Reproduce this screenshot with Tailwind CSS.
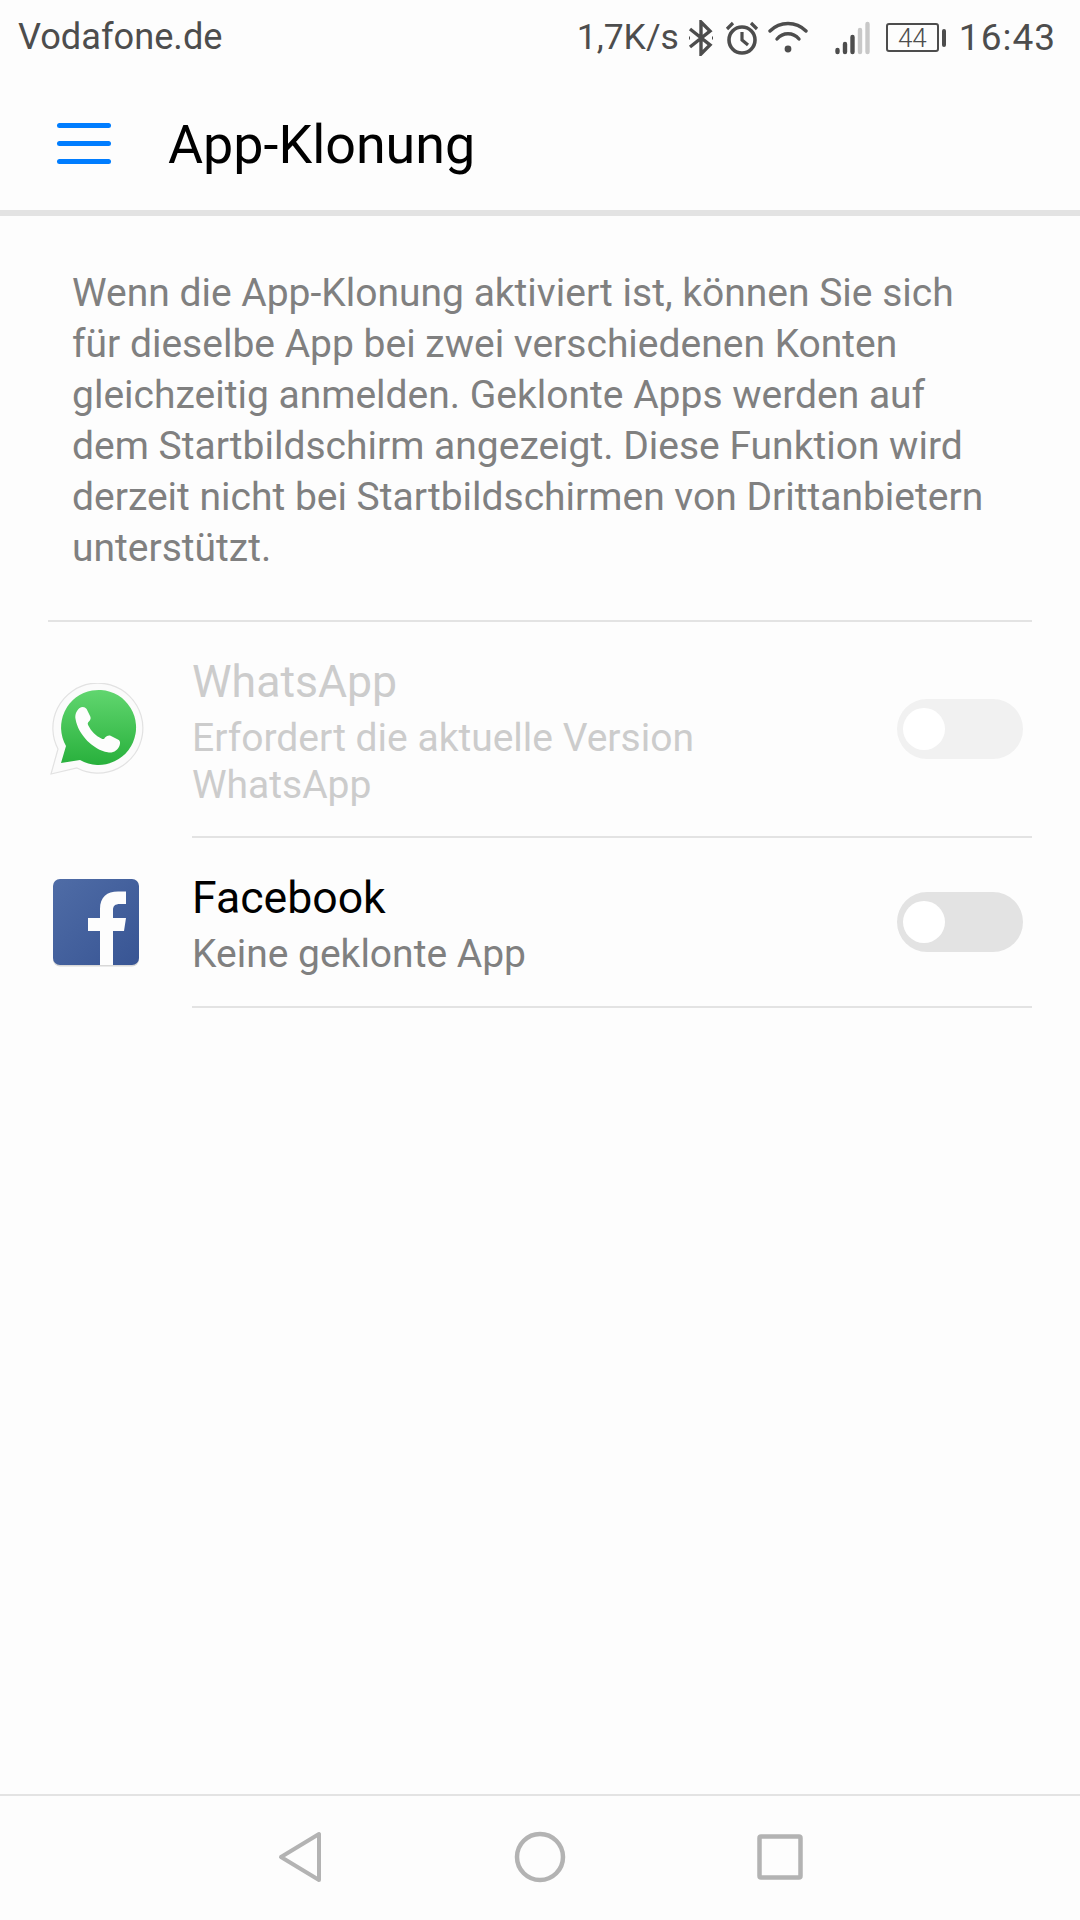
<!DOCTYPE html>
<html lang="de">
<head>
    <meta charset="UTF-8">
    <meta name="viewport" content="width=device-width, initial-scale=1.0">
    <title>App-Klonung</title>
    <script src="https://cdn.jsdelivr.net/npm/@tailwindcss/browser@4"></script>
</head>
<body class="w-[1080px] h-[1920px] flex flex-col bg-[#fdfdfd] font-[Roboto,sans-serif] overflow-hidden">

    <!-- Statusleiste -->
    <div class="h-[74px] shrink-0 flex items-center pl-[18px] pr-[24px] pt-[1px] text-[#4d4d4d]">
        <span class="text-[36.2px] flex-1">Vodafone.de</span>
        <span class="text-[35.5px] mr-[9px]">1,7K/s</span>
        <svg class="w-[26px] h-[36px] mr-[11px]" viewBox="0 0 26 36" fill="none" stroke="#4d4d4d" stroke-width="3.4"><path d="M2 9 L22 25 L13 34 V2 L22 11 L2 27"/><path d="M24 18h1M1 18h1" stroke-width="3"/></svg>
        <svg class="w-[34px] h-[34px] mr-[9px]" viewBox="0 0 34 34" fill="none" stroke="#4d4d4d" stroke-width="3.6"><circle cx="17" cy="19" r="13"/><path d="M17 11v8l6 5M2 8l6-6M32 8l-6-6" stroke-width="3.2"/></svg>
        <svg class="w-[40px] h-[34px] mr-[27px]" viewBox="0 0 40 34" fill="none" stroke="#4d4d4d" stroke-width="3.4" stroke-linecap="round"><path d="M2 10C12 0 28 0 38 10"/><path d="M9 18C15 11 25 11 31 18"/><circle cx="20" cy="28" r="3.4" fill="#4d4d4d" stroke="none"/></svg>
        <svg class="w-[35px] h-[34px] mr-[16px]" viewBox="0 0 35 34" stroke-linecap="round" stroke-width="4.4"><path d="M2.5 29v2M10 23v8M17.5 16v15" stroke="#4d4d4d"/><path d="M25 9v22M32.5 3v28" stroke="#c8c8c8"/></svg>
        <div class="w-[53px] h-[29px] border-2 border-[#4d4d4d] rounded-[3px] flex items-center justify-center text-[26px] font-light leading-none">44</div>
        <div class="w-[4px] h-[18px] bg-[#4d4d4d] rounded-[2px] ml-[3px] mr-[13px]"></div>
        <span class="text-[37px] tracking-[1px]">16:43</span>
    </div>

    <!-- Kopfzeile -->
    <div class="h-[142px] shrink-0 flex items-center border-b-[6px] border-[#e3e3e3] pt-[3px]">
        <div class="ml-[57px] w-[54px] flex flex-col gap-[13px]">
            <div class="h-[5px] rounded-full bg-[#007dff]"></div>
            <div class="h-[5px] rounded-full bg-[#007dff]"></div>
            <div class="h-[5px] rounded-full bg-[#007dff]"></div>
        </div>
        <h1 class="ml-[57px] mt-[4px] text-[53.8px] text-black">App-Klonung</h1>
    </div>

    <!-- Beschreibung -->
    <p class="pt-[52px] pl-[72px] h-[403px] shrink-0 text-[39px] leading-[51px] text-[#808080] whitespace-nowrap">Wenn die App-Klonung aktiviert ist, können Sie sich<br>für dieselbe App bei zwei verschiedenen Konten<br>gleichzeitig anmelden. Geklonte Apps werden auf<br>dem Startbildschirm angezeigt. Diese Funktion wird<br>derzeit nicht bei Startbildschirmen von Drittanbietern<br>unterstützt.</p>

    <!-- App-Liste -->
    <div class="mx-[48px] mt-[1px] border-t-2 border-[#e3e3e3]"></div>

    <div class="flex items-center h-[214px] shrink-0">
        <div class="w-[144px] pl-[50px] shrink-0">
            <svg class="w-[94px] h-[94px] mt-[2px]" viewBox="0 0 94 94">
                <defs><linearGradient id="wa" x1="0" y1="0" x2="0" y2="1"><stop offset="0" stop-color="#61d66f"/><stop offset="1" stop-color="#28b03c"/></linearGradient></defs>
                <path d="M1 91 L8 66 A45 45 0 1 1 27 85 Z" fill="#fbfbfb" stroke="#e2e2e2" stroke-width="1.2"/>
                <path d="M11 80 L16 63 A37.5 37.5 0 1 1 30 77 Z" fill="url(#wa)"/>
                <path transform="translate(3.5 4) scale(0.92)" d="M28 23 C31 21 34 21 36 24 L40 32 C41 34 40 36 38 38 C37 39 37 40 38 42 C41 48 46 53 52 56 C54 57 55 57 56 55 C58 53 60 52 62 53 L70 57 C72 58 73 60 72 63 C70 69 65 72 59 71 C43 68 27 52 24 35 C23 30 25 26 28 23 Z" fill="#fdfdfd"/>
            </svg>
        </div>
        <div class="flex-1 pl-[48px] pt-[8px] text-[#cccccc]">
            <div class="text-[44.6px] leading-[50px]">WhatsApp</div>
            <div class="text-[39px] leading-[47px] mt-[8px]">Erfordert die aktuelle Version<br>WhatsApp</div>
        </div>
        <div class="w-[126px] h-[60px] rounded-full bg-[#f1f1f1] flex items-center pl-[6px] mr-[57px] shrink-0">
            <div class="w-[42px] h-[42px] rounded-full bg-white"></div>
        </div>
    </div>
    <div class="ml-[192px] mr-[48px] border-t-2 border-[#e3e3e3]"></div>

    <div class="flex items-center h-[168px] shrink-0">
        <div class="w-[144px] pl-[53px] shrink-0">
            <svg class="w-[86px] h-[88px] mt-[2px]" viewBox="0 0 86 88">
                <defs><linearGradient id="fb" x1="0" y1="0" x2="1" y2="1"><stop offset="0" stop-color="#4f6ca6"/><stop offset="1" stop-color="#385594"/></linearGradient></defs>
                <rect x="0" y="1.5" width="86" height="86" rx="7" fill="#d8d8d8"/>
                <rect x="0" y="0" width="86" height="86" rx="7" fill="url(#fb)"/>
                <path d="M47 86 V52 H35 V39 H47 V30 C47 18 54 12.5 65 12.5 H73 V25 H67 C62 25 60 27 60 31 V39 H73 L71 52 H60 V86 Z" fill="#fdfdfd"/>
            </svg>
        </div>
        <div class="flex-1 pl-[48px] pt-[6px]">
            <div class="text-[44.6px] leading-[50px] text-black">Facebook</div>
            <div class="text-[39px] leading-[47px] mt-[8px] text-[#808080]">Keine geklonte App</div>
        </div>
        <div class="w-[126px] h-[60px] rounded-full bg-[#e3e3e3] flex items-center pl-[6px] mr-[57px] shrink-0">
            <div class="w-[42px] h-[42px] rounded-full bg-white"></div>
        </div>
    </div>
    <div class="ml-[192px] mr-[48px] border-t-2 border-[#e3e3e3]"></div>

    <div class="flex-1"></div>

    <!-- Navigationsleiste -->
    <div class="h-[126px] shrink-0 border-t-2 border-[#e3e3e3] flex items-center pb-[3px]">
        <svg class="w-[44px] h-[52px] ml-[278px]" viewBox="0 0 44 52" fill="none" stroke="#b3b3b3" stroke-width="4" stroke-linejoin="round"><path d="M41 3 V49 L3 26 Z"/></svg>
        <svg class="w-[52px] h-[52px] ml-[192px]" viewBox="0 0 52 52" fill="none" stroke="#b3b3b3" stroke-width="4.5"><circle cx="26" cy="26" r="23"/></svg>
        <svg class="w-[46px] h-[46px] ml-[191px]" viewBox="0 0 46 46" fill="none" stroke="#b3b3b3" stroke-width="4.5" stroke-linejoin="round"><rect x="2.5" y="2.5" width="41" height="41" rx="1.5"/></svg>
    </div>

</body>
</html>
